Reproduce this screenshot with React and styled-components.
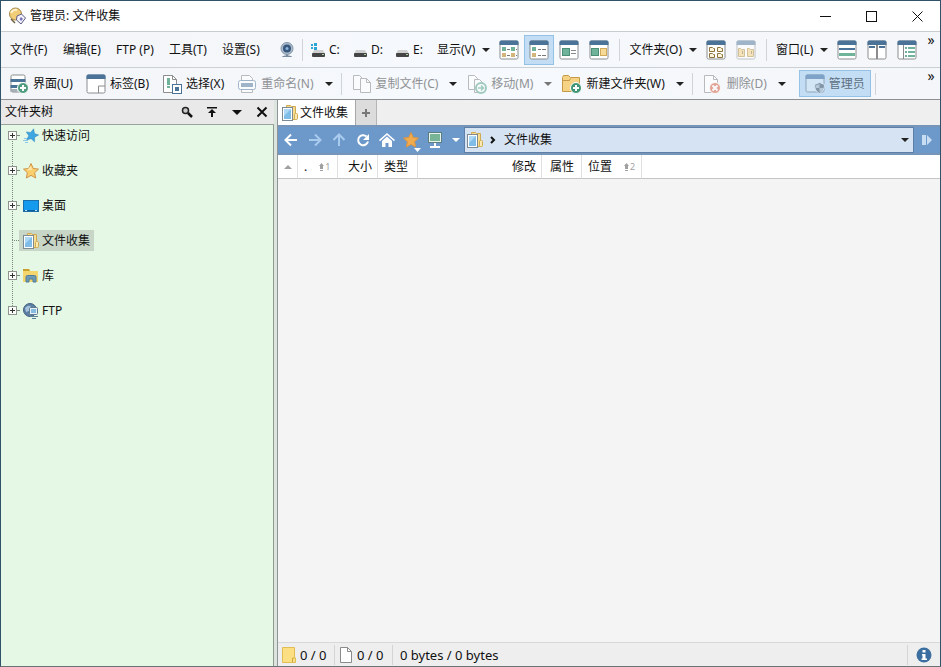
import styled, { createGlobalStyle, css } from "styled-components";

const blue = "#4b7397";
const green = "#6fb39b";

/* ---------- icons ---------- */

function AppIcon() {
  return (
    <Icon $w={18} viewBox="0 0 18 18">
      <circle cx="7.5" cy="7" r="6" fill="#f2cd78" stroke="#a58545" />
      <path d="M3 6a5 5 0 0 1 6-3" stroke="#fff3cf" strokeWidth="2" fill="none" />
      <path d="M9 9l4.500-2 4 4-4.500 6-4.500-4z" fill="#f4f3fc" stroke="#5c5a80" />
      <path d="M13 10l2 2-2 2-1.500-2z" fill="#7674b8" />
      <path d="M3 12l4 4" stroke="#6d5b3a" strokeWidth="1.500" />
    </Icon>
  );
}

function Caret({ color = "#222" }) {
  return (
    <Icon $w={8} $h={4} viewBox="0 0 8 4">
      <path d="M0 0h8L4 4z" fill={color} />
    </Icon>
  );
}

function SortCaret() {
  return (
    <SortIcon $w={8} $h={4} viewBox="0 0 8 4">
      <path d="M0 4h8L4 0z" fill="#a0a0a0" />
    </SortIcon>
  );
}

function WebcamIcon() {
  return (
    <Icon $w={16} viewBox="0 0 16 16">
      <circle cx="8" cy="6.500" r="6" fill="#a9bacb" stroke="#8595a8" />
      <circle cx="8" cy="6.500" r="4" fill="#38577c" />
      <circle cx="8" cy="6.500" r="1.500" fill="#8fb5dd" />
      <path d="M7 12.500h2v1.500H7zM3 15c0-1 2-1.500 5-1.500s5 .5 5 1.500z" fill="#7b8ca0" />
    </Icon>
  );
}

function DriveIcon({ system }) {
  return (
    <Icon $w={16} viewBox="0 0 16 16">
      <path d="M4 8h9l2 4H2z" fill="#cfcfcf" />
      <rect x="2" y="11" width="13" height="4" rx="1" fill="#454545" />
      <rect x="12" y="12" width="2" height="1" fill="#a8d8a0" />
      {system && <path d="M1 2h2v2H1zM4 1h3v3H4zM1 5h2v2H1zM4 5h3v3H4z" fill="#2aa7d4" />}
    </Icon>
  );
}

function WindowIcon({ faded, children }) {
  return (
    <Icon $w={20} $faded={faded} viewBox="0 0 20 20">
      <rect x="1" y="1" width="18" height="18" rx="1.500" fill="#fff" stroke="#8a8c8e" />
      <path d="M.5 5V2Q.5.5 2 .5h16q1.500 0 1.500 1.500v3z" fill={blue} />
      {children}
    </Icon>
  );
}

function DetailsIcon() {
  return (
    <WindowIcon>
      <path d="M3 7h4v4H3zM12 7h4v4h-4z" fill={green} />
      <path d="M3 13h4v4H3zM12 13h4v4h-4z" fill="#d3b57c" />
      <path d="M8 9.500h3M8 15.500h3M17 9.500h1M17 15.500h1" stroke="#77797b" />
    </WindowIcon>
  );
}

function ListIcon() {
  return (
    <WindowIcon>
      <path d="M3 7h4v4H3z" fill={green} />
      <path d="M3 13h4v4H3z" fill="#d3b57c" />
      <path d="M9 9.500h3M13 9.500h4M9 15.500h3M13 15.500h4" stroke="#77797b" />
    </WindowIcon>
  );
}

function TilesIcon() {
  return (
    <WindowIcon>
      <rect x="3.500" y="8.500" width="7" height="7" fill={green} stroke="#4c8f76" />
      <path d="M12 10.500h5M12 13.500h5" stroke="#8a8c8e" />
    </WindowIcon>
  );
}

function ThumbsIcon() {
  return (
    <WindowIcon>
      <rect x="2.500" y="8.500" width="7" height="7" fill={green} stroke="#4c8f76" />
      <rect x="11.500" y="8.500" width="6" height="7" fill="#f5da98" stroke="#d1aa5c" />
    </WindowIcon>
  );
}

function FoldersIcon() {
  return (
    <WindowIcon>
      <path
        d="M3.500 7.500h3l1 1h1v3h-5zM11.500 7.500h3l1 1h1v3h-5zM3.500 13.500h3l1 1h1v3h-5zM11.500 13.500h3l1 1h1v3h-5z"
        fill="#fdf6df"
        stroke="#8c743c"
      />
    </WindowIcon>
  );
}

function FoldersPairIcon() {
  return (
    <WindowIcon faded>
      <path d="M2.500 8.500h2l1 1h3v7h-6zM11.500 8.500h2l1 1h3v7h-6z" fill="#f5cf78" stroke="#b08c3e" />
      <path d="M6.500 11v3M15.500 11v3" stroke="#8c743c" />
    </WindowIcon>
  );
}

function RowsIcon() {
  return (
    <WindowIcon>
      <path d="M2 8h16v2H2z" fill={blue} />
      <path d="M2 13h16v3H2z" fill={green} />
    </WindowIcon>
  );
}

function ColumnsIcon() {
  return (
    <WindowIcon>
      <path d="M2 6h6v2H2zM12 6h6v2h-6z" fill={blue} />
      <path d="M10 5v14" stroke="#8a8c8e" strokeWidth="2" />
    </WindowIcon>
  );
}

function SideTreeIcon() {
  return (
    <WindowIcon>
      <path d="M6.500 5v14" stroke="#8a8c8e" />
      <path d="M8 7h2v2H8zM11 7h7v2h-7zM8 11h2v2H8zM11 11h7v2h-7zM8 15h2v2H8zM11 15h7v2h-7z" fill={green} />
    </WindowIcon>
  );
}

function Badge({ x, y, r = 5, fill = "#4f9c80", children }) {
  return (
    <g transform={`translate(${x} ${y})`}>
      <circle r={r} fill={fill} stroke="#fff" strokeWidth="1" />
      <path d={children} stroke="#fff" strokeWidth="2" fill="none" />
    </g>
  );
}

function LayoutIcon() {
  return (
    <Icon $w={20} viewBox="0 0 20 20">
      <rect x="2" y="1" width="14" height="17" rx="1.500" fill="#fff" stroke="#8a8c8e" />
      <path d="M1.500 5h15v3h-15zM1.500 11h8v3h-8z" fill={blue} />
      <path d="M1.500 15h7v3h-7z" fill="#a5adb5" />
      <Badge x={14} y={14} r={5.5}>M-3 0h6M0-3v6</Badge>
    </Icon>
  );
}

function TabsIcon() {
  return (
    <Icon $w={20} viewBox="0 0 20 20">
      <rect x="1" y="1" width="18" height="18" rx="1.500" fill="#fff" stroke="#8a8c8e" />
      <path d="M.5 5V2Q.5.5 2 .5h16q1.500 0 1.500 1.500v3z" fill={blue} />
      <path d="M12.500 19v-7H19" fill="none" stroke="#8a8c8e" />
    </Icon>
  );
}

function SelectIcon() {
  return (
    <Icon $w={20} viewBox="0 0 20 20">
      <path d="M1.500 1.500h9l4 4v13h-13z" fill="#fff" stroke="#8a8c8e" />
      <path d="M10.500 1.500v4h4" fill="none" stroke="#8a8c8e" />
      <path d="M5 4h3v7H5zM5 12h3v2H5z" fill={green} />
      <rect x="10.500" y="10.500" width="9" height="9" fill="#fff" stroke={blue} />
      <path d="M13 13h4v4h-4z" fill={blue} />
    </Icon>
  );
}

function RenameIcon() {
  return (
    <Icon $w={20} $faded viewBox="0 0 20 20">
      <path d="M4.500 7V1.500h8l3 3V7M4.500 14v4.500h11V14" fill="#fff" stroke="#7c7e80" />
      <rect x="1.500" y="6.500" width="17" height="9" rx="2" fill="#fff" stroke={blue} />
      <path d="M4 9h12v4H4z" fill={blue} />
    </Icon>
  );
}

function CopyIcon() {
  return (
    <Icon $w={20} $faded viewBox="0 0 20 20">
      <path d="M1.500 1.500h6l3 3v11h-9z" fill="#fff" stroke="#7c7e80" />
      <path d="M8.500 4.500h6l4 4v10h-10z" fill="#fff" stroke="#7c7e80" />
      <path d="M14.500 4.500v4h4" fill="none" stroke="#7c7e80" />
    </Icon>
  );
}

function MoveIcon() {
  return (
    <Icon $w={20} $faded viewBox="0 0 20 20">
      <path d="M1.500 1.500h6l3 3v11h-9z" fill="#fff" stroke="#7c7e80" />
      <path d="M7.500 5.500h5l4 4v9h-9z" fill="#fff" stroke="#7c7e80" />
      <circle cx="14" cy="14" r="5" fill="#fff" stroke="#4f9c80" strokeWidth="2" />
      <path d="M11 14h5M14 11.500l2.500 2.500-2.500 2.500" fill="none" stroke="#4f9c80" strokeWidth="1.500" />
    </Icon>
  );
}

function NewFolderIcon() {
  return (
    <Icon $w={20} viewBox="0 0 20 20">
      <path d="M.5 3.500l1-2h5l2 2h9v14H.5z" fill="#f6d284" stroke="#c49a48" />
      <path d="M.5 6.500h7l1-2" fill="none" stroke="#c49a48" />
      <Badge x={14} y={14} r={5.5} fill="#3f9575">M-3 0h6M0-3v6</Badge>
    </Icon>
  );
}

function DeleteIcon() {
  return (
    <Icon $w={20} $faded viewBox="0 0 20 20">
      <path d="M1.500 1.500h9l4 4v13h-13z" fill="#fff" stroke="#7c7e80" />
      <path d="M10.500 1.500v4h4" fill="none" stroke="#7c7e80" />
      <Badge x={12} y={14} r={5.5} fill="#d3512f">M-2.500-2.500l5 5M2.500-2.500l-5 5</Badge>
    </Icon>
  );
}

function AdminIcon() {
  return (
    <Icon $w={20} viewBox="0 0 20 20">
      <rect x="1" y="1" width="18" height="17" rx="1.500" fill="#d3e6f6" stroke="#8fa5b8" />
      <path d="M.5 5V2Q.5.5 2 .5h16q1.500 0 1.500 1.500v3z" fill="#7fa3c6" />
      <path d="M14.500 8.500l5 2c0 5-2 7-5 9-3-2-5-4-5-9z" fill="#8296a8" stroke="#d3e6f6" />
      <path d="M14.500 14h4c-.5 2-2 3.500-4 4.500zM14.500 14v-4l-4 1.500v2.500z" fill="#b5c8d8" />
    </Icon>
  );
}

function CollectionIcon() {
  return (
    <Icon $w={16} viewBox="0 0 16 16">
      <path d="M4.500 2.500v-2h4l1 1h4v13h-9z" fill="#f8dd91" stroke="#d0aa50" />
      <rect x="12.500" y="8.500" width="3" height="6" rx="1" fill="#fbe9b4" stroke="#d0aa50" />
      <rect x=".5" y="2.500" width="10" height="13" fill="#fff" stroke="#7d8a94" />
      <path d="M2 4h7v10H2z" fill="#7fbce8" />
      <path d="M2 4h7L2 11z" fill="#acd8f5" />
    </Icon>
  );
}

const starPath = "M8 .5l2.300 5 5.200.6-3.900 3.600 1.100 5.300L8 12.400 3.300 15l1.100-5.300L.5 6.100l5.200-.6z";

function QuickIcon() {
  return (
    <Icon $w={16} viewBox="0 0 16 16">
      <path d="M0 12.500h5M1 10.500h4M2 14.500h3" stroke="#8cc8ea" />
      <path d={starPath} fill="#3fa6e2" stroke="#2780b8" strokeWidth=".5" transform="rotate(14 8 8) translate(2 0) scale(.85)" />
    </Icon>
  );
}

function FavoriteIcon() {
  return (
    <Icon $w={16} viewBox="0 0 16 16">
      <path d={starPath} fill="#fbcf6d" stroke="#cf9449" />
      <path d="M8 3l1 4-5 0z" fill="#fde6aa" />
    </Icon>
  );
}

function DesktopIcon() {
  return (
    <Icon $w={16} viewBox="0 0 16 16">
      <rect x=".5" y="2.500" width="15" height="11" fill="#149bed" stroke="#1b6dab" />
      <path d="M1 12h14v1H1z" fill="#0a5d96" />
      <path d="M2 12.500h2M12 12.500h2" stroke="#bfe4ff" />
    </Icon>
  );
}

function LibraryIcon() {
  return (
    <Icon $w={16} viewBox="0 0 16 16">
      <path d="M0 1h6l1 2h8v11H0z" fill="#f4d66c" />
      <path d="M0 1h6l1 2H0z" fill="#c9a02c" />
      <path d="M3 14V9q0-1.500 1.500-1.500h7Q13 7.500 13 9v5h-3v-3H6v3z" fill="#6f9ab5" stroke="#4f7c98" />
    </Icon>
  );
}

function FtpIcon() {
  return (
    <Icon $w={16} viewBox="0 0 16 16">
      <circle cx="7" cy="7" r="6.500" fill="#5d7fa3" stroke="#44617f" />
      <path d="M2 5q4-4 6-1T3 9zM4 12l3-2" fill="#a7c4de" />
      <rect x="6.500" y="4.500" width="8" height="7" rx="1" fill="#e9f1f7" stroke="#5d7b93" />
      <rect x="8" y="6" width="5" height="4" fill="#86bce0" />
      <path d="M7 13.500h8M9 15.500h4" stroke="#5d8099" />
    </Icon>
  );
}

function NavArrow({ angle = 0, color = "#fff" }) {
  return (
    <Icon $w={16} viewBox="0 0 16 16">
      <path
        d="M14 8H3M8 2.500L2.500 8 8 13.500"
        fill="none"
        stroke={color}
        strokeWidth="2"
        transform={`rotate(${angle} 8 8)`}
      />
    </Icon>
  );
}

function ReloadIcon() {
  return (
    <Icon $w={16} viewBox="0 0 16 16">
      <path d="M11.500 4.500A5 5 0 1 0 13 9.500" fill="none" stroke="#fff" strokeWidth="2" />
      <path d="M14 2v6H8z" fill="#fff" />
    </Icon>
  );
}

function HomeIcon() {
  return (
    <Icon $w={16} viewBox="0 0 16 16">
      <path d="M0 8l8-7 8 7-1 1.200L8 3 1 9.200z" fill="#fff" />
      <path d="M3 9l5-4.500L13 9v6H9.500v-4h-3v4H3z" fill="#fff" />
    </Icon>
  );
}

function StarMenuIcon() {
  return (
    <Icon $w={20} $h={24} viewBox="0 0 20 24">
      <path d={starPath} fill="#f1ab4c" stroke="#d99643" transform="translate(2 4)" />
      <path d="M13 20h7l-3.500 4z" fill="#fff" />
    </Icon>
  );
}

function ComputerIcon() {
  return (
    <Icon $w={16} viewBox="0 0 16 16">
      <rect x="1.500" y=".5" width="13" height="10" fill="#e9f3ee" stroke="#5b7f80" />
      <rect x="3" y="2" width="10" height="7" fill="#77b596" />
      <path d="M7 11h2v3H7zM3 14h10v2H3z" fill="#fff" />
    </Icon>
  );
}

function ChevronIcon() {
  return (
    <Icon $w={8} viewBox="0 0 8 8">
      <path d="M2 1l3 3-3 3" fill="none" stroke="#111" strokeWidth="2" />
    </Icon>
  );
}

function SplitIcon() {
  return (
    <Icon $w={12} viewBox="0 0 12 12">
      <path d="M1 1h4v10H1zM6 1l5 5-5 5z" fill="#c8dcf2" />
    </Icon>
  );
}

function PanelIcon({ d, fill = "none" }) {
  return (
    <Icon $w={12} viewBox="0 0 12 12">
      <path d={d} fill={fill} stroke="#111" strokeWidth={fill === "none" ? 2 : 0} />
    </Icon>
  );
}

function SearchIcon() {
  return (
    <Icon $w={12} viewBox="0 0 12 12">
      <circle cx="4.500" cy="4.500" r="3" fill="#c9c9c9" stroke="#222" strokeWidth="1.500" />
      <path d="M7 7l4 4" stroke="#111" strokeWidth="2.500" />
    </Icon>
  );
}

function SortMark({ n }) {
  return (
    <Mark>
      <Icon $w={5} $h={8} viewBox="0 0 5 8">
        <path d="M0 3L2.500 0 5 3H4v3H1V3zM1 7h3v1H1z" fill="#a0a0a0" />
      </Icon>
      {n}
    </Mark>
  );
}

function FolderCountIcon() {
  return (
    <Icon $w={14} $h={16} viewBox="0 0 14 16">
      <path d="M.5.5h12V10l1 1v4.500H.5z" fill="#fbdf82" stroke="#e0bd55" />
      <path d="M10.500 15v-4h2" fill="none" stroke="#cda943" />
    </Icon>
  );
}

function FileCountIcon() {
  return (
    <Icon $w={14} $h={16} viewBox="0 0 14 16">
      <path d="M1.500.5h7l4 4v11h-11z" fill="#fff" stroke="#8b8b8b" />
      <path d="M8.500.5v4h4" fill="none" stroke="#8b8b8b" />
    </Icon>
  );
}

function InfoIcon() {
  return (
    <Icon $w={16} viewBox="0 0 16 16">
      <circle cx="8" cy="8" r="7.500" fill="#3c6f9f" />
      <path d="M6.500 3h3v2.500h-3zM6 7h3.500v4.500H11V13H5.500v-1.500h1V8.500H6z" fill="#fff" />
    </Icon>
  );
}

/* ---------- data ---------- */

const menus = ["文件(F)", "编辑(E)", "FTP (P)", "工具(T)", "设置(S)"];

const drives = [
  { name: "C:", system: true },
  { name: "D:" },
  { name: "E:" },
];

const viewModes = [
  { label: "详细", icon: <DetailsIcon /> },
  { label: "列表", icon: <ListIcon />, active: true },
  { label: "平铺", icon: <TilesIcon /> },
  { label: "缩略图", icon: <ThumbsIcon /> },
];

const windowLayouts = [
  { label: "水平", icon: <RowsIcon /> },
  { label: "垂直", icon: <ColumnsIcon /> },
  { label: "文件夹树", icon: <SideTreeIcon /> },
];

const tree = [
  { name: "快速访问", icon: <QuickIcon />, expandable: true },
  { name: "收藏夹", icon: <FavoriteIcon />, expandable: true },
  { name: "桌面", icon: <DesktopIcon />, expandable: true },
  { name: "文件收集", icon: <CollectionIcon />, selected: true },
  { name: "库", icon: <LibraryIcon />, expandable: true },
  { name: "FTP", icon: <FtpIcon />, expandable: true },
];

const navButtons = [
  { label: "后退", icon: <NavArrow /> },
  { label: "前进", icon: <NavArrow angle={180} color="#a9cbee" /> },
  { label: "向上", icon: <NavArrow angle={90} color="#a9cbee" /> },
  { label: "刷新", icon: <ReloadIcon /> },
  { label: "主页", icon: <HomeIcon /> },
  { label: "收藏", icon: <StarMenuIcon /> },
  { label: "计算机", icon: <ComputerIcon /> },
];

/* ---------- parts ---------- */

function DropDown({ label }) {
  return (
    <DropDownButton>
      {label}
      <Caret />
    </DropDownButton>
  );
}

function Tool({ icon, label, menu, disabled, dimMenu }) {
  return (
    <>
      <ToolButton disabled={disabled}>
        {icon}
        {label}
      </ToolButton>
      {menu && (
        <CaretButton aria-label={`${label} 菜单`}>
          <Caret color={dimMenu ? "#777" : "#222"} />
        </CaretButton>
      )}
    </>
  );
}

export default function App() {
  return (
    <>
      <GlobalStyle />
      <Window>
        <TitleBar>
          <AppIcon />
          <Title>管理员: 文件收集</Title>
          <CaptionButton aria-label="最小化">
            <Icon $w={11} viewBox="0 0 11 11">
              <path d="M0 5.500h11" stroke="#111" />
            </Icon>
          </CaptionButton>
          <CaptionButton aria-label="最大化">
            <Icon $w={11} viewBox="0 0 11 11">
              <rect x=".5" y=".5" width="10" height="10" fill="none" stroke="#111" />
            </Icon>
          </CaptionButton>
          <CaptionButton aria-label="关闭">
            <Icon $w={11} viewBox="0 0 11 11">
              <path d="M.5.5l10 10M10.500.5l-10 10" stroke="#111" />
            </Icon>
          </CaptionButton>
        </TitleBar>

        <MenuBar>
          {menus.map((m) => (
            <MenuButton key={m}>{m}</MenuButton>
          ))}
          <CameraButton aria-label="摄像头">
            <WebcamIcon />
          </CameraButton>
          <Separator $tight />
          {drives.map((d) => (
            <DriveButton key={d.name}>
              <DriveIcon system={d.system} />
              {d.name}
            </DriveButton>
          ))}
          <DropDown label="显示(V)" />
          {viewModes.map((v) => (
            <IconButton key={v.label} aria-label={v.label} $active={v.active}>
              {v.icon}
            </IconButton>
          ))}
          <Separator />
          <DropDown label="文件夹(O)" />
          <IconButton aria-label="文件夹格式">
            <FoldersIcon />
          </IconButton>
          <IconButton aria-label="文件夹对" disabled>
            <FoldersPairIcon />
          </IconButton>
          <Separator />
          <DropDown label="窗口(L)" />
          {windowLayouts.map((l) => (
            <IconButton key={l.label} aria-label={l.label}>
              {l.icon}
            </IconButton>
          ))}
          <More aria-label="更多">»</More>
        </MenuBar>

        <ToolBar>
          <Tool icon={<LayoutIcon />} label="界面(U)" />
          <Tool icon={<TabsIcon />} label="标签(B)" />
          <Tool icon={<SelectIcon />} label="选择(X)" />
          <Tool icon={<RenameIcon />} label="重命名(N)" disabled menu />
          <Separator $tight />
          <Tool icon={<CopyIcon />} label="复制文件(C)" disabled menu />
          <Tool icon={<MoveIcon />} label="移动(M)" disabled menu dimMenu />
          <Tool icon={<NewFolderIcon />} label="新建文件夹(W)" menu />
          <Separator $tight />
          <Tool icon={<DeleteIcon />} label="删除(D)" disabled menu />
          <Separator $tight $hidden />
          <ToolButton $active disabled>
            <AdminIcon />
            管理员
          </ToolButton>
          <Separator $tight />
          <More aria-label="更多">»</More>
        </ToolBar>

        <Body>
          <SidePanel>
            <PanelHeader>
              <PanelTitle>文件夹树</PanelTitle>
              <PanelButton aria-label="搜索">
                <SearchIcon />
              </PanelButton>
              <PanelButton aria-label="转到顶部">
                <PanelIcon fill="#111" d="M1 1h10v1.500H1zM6 3l4 4H7v4H5V7H2z" />
              </PanelButton>
              <PanelButton aria-label="菜单">
                <PanelIcon fill="#111" d="M1 4h10L6 9z" />
              </PanelButton>
              <PanelButton aria-label="关闭">
                <PanelIcon d="M1.500 1.500l9 9M10.500 1.500l-9 9" />
              </PanelButton>
            </PanelHeader>
            <Tree>
              {tree.map((node) => (
                <TreeRow key={node.name}>
                  {node.expandable ? (
                    <Expander aria-label={`展开 ${node.name}`}>
                      <Icon $w={9} viewBox="0 0 9 9">
                        <rect x=".5" y=".5" width="8" height="8" fill="#fafdfa" stroke="#8f948f" />
                        <path d="M2 4.500h5M4.500 2v5" stroke="#333" />
                      </Icon>
                    </Expander>
                  ) : (
                    <Stem />
                  )}
                  <TreeLink href="#" $selected={node.selected}>
                    {node.icon}
                    {node.name}
                  </TreeLink>
                </TreeRow>
              ))}
            </Tree>
          </SidePanel>

          <Main>
            <Tabs>
              <Tab>
                <CollectionIcon />
                文件收集
              </Tab>
              <AddTab aria-label="新标签">
                <Icon $w={10} viewBox="0 0 10 10">
                  <path d="M1 5h8M5 1v8" stroke="#777" strokeWidth="2" />
                </Icon>
              </AddTab>
            </Tabs>
            <NavBar>
              {navButtons.map((b) => (
                <NavButton key={b.label} aria-label={b.label}>
                  {b.icon}
                </NavButton>
              ))}
              <NavButton aria-label="计算机 菜单" $w={17}>
                <Caret color="#fff" />
              </NavButton>
              <Address>
                <CollectionIcon />
                <ChevronIcon />
                <Crumb href="#">文件收集</Crumb>
                <AddressMenu aria-label="历史">
                  <Caret />
                </AddressMenu>
              </Address>
              <NavButton aria-label="双窗格" $w={26}>
                <SplitIcon />
              </NavButton>
            </NavBar>
            <Files>
              <thead>
                <tr>
                  <Column $w={20}>
                    <SortCaret />
                  </Column>
                  <Column $w={40}>
                    .<SortMark n="1" />
                  </Column>
                  <Column $w={40} $align="right">大小</Column>
                  <Column $w={40}>类型</Column>
                  <Column $w={124} $align="right">修改</Column>
                  <Column $w={40} $align="center">属性</Column>
                  <Column $w={60}>
                    位置
                    <SortMark n="2" />
                  </Column>
                  <Column $last />
                </tr>
              </thead>
            </Files>
            <FileArea />
            <StatusBar>
              <Status $w={57}>
                <FolderCountIcon />0 / 0
              </Status>
              <Status $w={58}>
                <FileCountIcon />0 / 0
              </Status>
              <Status $grow>0 bytes / 0 bytes</Status>
              <InfoButton aria-label="信息">
                <InfoIcon />
              </InfoButton>
            </StatusBar>
          </Main>
        </Body>
      </Window>
    </>
  );
}

/* ---------- styles ---------- */

const GlobalStyle = createGlobalStyle`
  * {
    box-sizing: border-box;
  }

  body {
    margin: 0;
    font: 12px/16px "Noto Sans", "Noto Sans CJK SC", sans-serif;
    color: #111;
  }

  button {
    display: flex;
    align-items: center;
    justify-content: center;
    flex: none;
    margin: 0;
    padding: 0;
    border: 0;
    background: none;
    color: inherit;
    font: inherit;
    white-space: nowrap;
  }

  a {
    color: inherit;
    text-decoration: none;
  }
`;

const Icon = styled.svg`
  display: block;
  flex: none;
  width: ${({ $w }) => $w}px;
  height: ${({ $w, $h }) => $h || $w}px;
  opacity: ${({ $faded }) => ($faded ? 0.5 : 1)};
`;

const SortIcon = styled(Icon)`
  margin: 0 auto;
`;

const Window = styled.div`
  display: flex;
  flex-direction: column;
  height: 100vh;
  overflow: hidden;
  border: 1px solid #2f5368;
  border-bottom-color: #6c7275;
`;

const TitleBar = styled.header`
  display: flex;
  align-items: center;
  height: 31px;
  flex: none;
  padding-left: 7px;
  background: #fff;
  border-bottom: 1px solid #c9cdd0;
`;

const Title = styled.h1`
  flex: 1;
  margin: 0 0 0 4px;
  font-size: 12px;
  font-weight: 400;
`;

const CaptionButton = styled.button`
  && {
    width: 46px;
    height: 100%;
  }
`;

const bar = css`
  display: flex;
  align-items: center;
  flex: none;
  background: linear-gradient(to right, #f3f5f8, #f6f9fd 50%, #f4f6f9);
`;

const MenuBar = styled.nav`
  ${bar}
  height: 36px;
  padding: 0 2px;
  border-bottom: 1px solid #cbd0d5;
`;

const ToolBar = styled.div`
  ${bar}
  height: 32px;
  padding: 0 2px;
  border-bottom: 1px solid #8d9093;
`;

const MenuButton = styled.button`
  && {
    justify-content: flex-start;
    min-width: 53px;
    height: 30px;
    padding: 0 7px;
  }
`;

const DropDownButton = styled.button`
  && {
    gap: 7px;
    height: 30px;
    padding: 0 4px;
  }
`;

const CameraButton = styled.button`
  && {
    width: 30px;
    height: 30px;
    padding-left: 8px;
  }
`;

const DriveButton = styled.button`
  && {
    justify-content: flex-start;
    gap: 3px;
    width: 42px;
    height: 30px;
    padding-left: 3px;
  }
`;

const activeLook = css`
  background: #c3ddf4;
  border: 1px solid #94c1e6;
`;

const IconButton = styled.button`
  && {
    width: 30px;
    height: 30px;
    ${({ $active }) => $active && activeLook}
  }
`;

const ToolButton = styled.button`
  && {
    gap: 4px;
    height: 27px;
    padding: ${({ $active }) => ($active ? "0 5px" : "0 7px 0 6px")};
    ${({ $active }) => $active && activeLook}
  }

  &&:disabled {
    color: ${({ $active }) => ($active ? "#5e6f80" : "#8f9194")};
  }
`;

const CaretButton = styled.button`
  && {
    width: 16px;
    height: 27px;
  }
`;

const Separator = styled.span`
  flex: none;
  width: 1px;
  height: 22px;
  margin: 0 ${({ $tight }) => ($tight ? 4 : 5)}px;
  background: ${({ $hidden }) => ($hidden ? "transparent" : "#d0d4d8")};
`;

const More = styled.button`
  && {
    align-self: flex-start;
    width: 14px;
    margin-left: auto;
    font-size: 14px;
  }
`;

const Body = styled.div`
  display: flex;
  flex: 1;
  min-height: 0;
`;

const SidePanel = styled.aside`
  display: flex;
  flex-direction: column;
  width: 276px;
  flex: none;
  border-right: 3px solid #dbe5de;
`;

const PanelHeader = styled.div`
  display: flex;
  align-items: center;
  height: 25px;
  flex: none;
  padding-left: 4px;
  background: #e9e9e9;
  border-bottom: 1px solid #9aa39c;
`;

const PanelTitle = styled.h2`
  flex: 1;
  margin: 0;
  font-size: 12px;
  font-weight: 400;
`;

const PanelButton = styled.button`
  && {
    width: 25px;
    height: 100%;
  }
`;

const Tree = styled.ul`
  display: flex;
  flex-direction: column;
  gap: 14px;
  flex: 1;
  margin: 0;
  padding: 0 0 0 7px;
  list-style: none;
  background: #e5f7e5;
  border-right: 1px solid #8e9a92;
`;

const TreeRow = styled.li`
  position: relative;
  display: flex;
  align-items: center;
  height: 21px;

  &::before {
    content: "";
    position: absolute;
    left: 4px;
    top: 10px;
    width: 7px;
    height: 35px;
    border-left: 1px dotted #7d877f;
  }

  &:last-child::before {
    height: 0;
  }
`;

const Expander = styled.button`
  && {
    position: relative;
    width: 11px;
    height: 9px;
    justify-content: flex-start;
  }

  &::after {
    content: "";
    flex: 1;
    border-top: 1px dotted #7d877f;
  }
`;

const Stem = styled.span`
  width: 11px;
  padding-left: 4px;

  &::after {
    content: "";
    display: block;
    border-top: 1px dotted #7d877f;
  }
`;

const TreeLink = styled.a`
  display: flex;
  align-items: center;
  gap: 3px;
  height: 21px;
  padding: 0 4px;
  background: ${({ $selected }) => ($selected ? "#c8d6c8" : "transparent")};
`;

const Main = styled.main`
  display: flex;
  flex-direction: column;
  flex: 1;
  min-width: 0;
  border-left: 1px solid #8e9498;
`;

const Tabs = styled.div`
  display: flex;
  height: 25px;
  flex: none;
  background: #efefef;
`;

const Tab = styled.button`
  && {
    gap: 2px;
    padding: 0 7px 0 4px;
    background: #fff;
    border-right: 1px solid #a8a8a8;
  }
`;

const AddTab = styled.button`
  && {
    width: 21px;
    background: #dcdcdc;
    border-right: 1px solid #b5b5b5;
  }
`;

const NavBar = styled.div`
  display: flex;
  align-items: center;
  height: 30px;
  flex: none;
  padding-left: 1px;
  background: #6c98ca;
  border-top: 2px solid #7695b8;
  border-bottom: 2px solid #7695b8;
`;

const NavButton = styled.button`
  && {
    width: ${({ $w = 24 }) => $w}px;
    height: 24px;
  }
`;

const Address = styled.div`
  display: flex;
  align-items: center;
  gap: 6px;
  flex: 1;
  height: 26px;
  padding-left: 2px;
  background: #d6e3f2;
  border: 1px solid #5c80a8;
`;

const Crumb = styled.a`
  flex: 1;
  padding-left: 1px;
`;

const AddressMenu = styled.button`
  && {
    width: 16px;
    height: 100%;
  }
`;

const Files = styled.table`
  width: 100%;
  table-layout: fixed;
  border-collapse: separate;
  border-spacing: 0;
  background: #fff;
`;

const Column = styled.th`
  width: ${({ $w }) => ($w ? `${$w}px` : "auto")};
  height: 24px;
  padding: 0 5px 0 6px;
  border-right: ${({ $last }) => ($last ? "0" : "1px solid #e0e0e0")};
  border-bottom: 1px solid #c4c4c4;
  font-weight: 400;
  text-align: ${({ $align = "left" }) => $align};
  white-space: nowrap;
`;

const Mark = styled.span`
  display: inline-flex;
  align-items: center;
  gap: 1px;
  margin-left: 12px;
  color: #a0a0a0;
  font-size: 9px;
`;

const FileArea = styled.section`
  flex: 1;
  background: #f4f4f4;
`;

const StatusBar = styled.footer`
  display: flex;
  align-items: center;
  height: 24px;
  flex: none;
  background: #eee;
  border-top: 1px solid #d8d8d8;
  font-size: 13px;
`;

const Status = styled.span`
  display: flex;
  align-items: center;
  gap: 4px;
  flex: ${({ $grow }) => ($grow ? 1 : "none")};
  width: ${({ $w }) => ($w ? `${$w}px` : "auto")};
  height: 20px;
  padding-left: ${({ $grow }) => ($grow ? 7 : 4)}px;
  border-right: 1px solid #d4d4d4;
`;

const InfoButton = styled.button`
  && {
    width: 32px;
    height: 100%;
  }
`;
